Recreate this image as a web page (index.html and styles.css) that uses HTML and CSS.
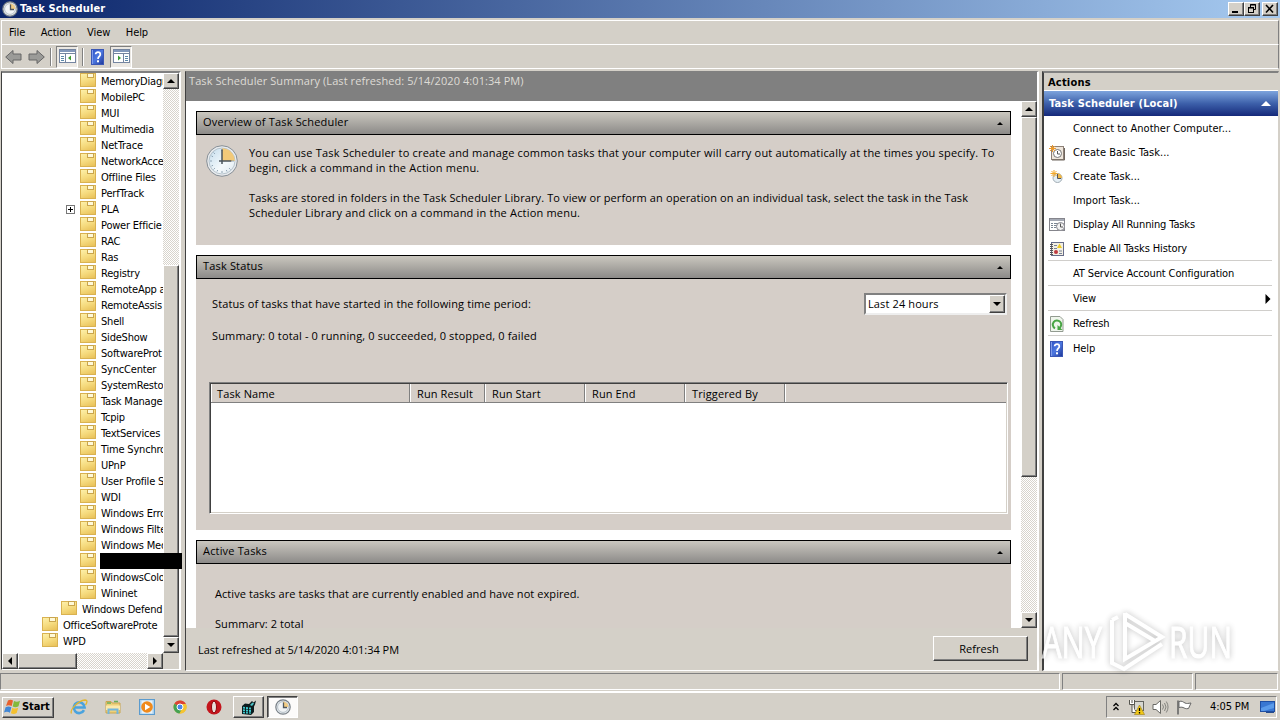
FILE: index.html
```html
<!DOCTYPE html>
<html lang="en">
<head>
  <meta charset="utf-8" />
  <title>Task Scheduler</title>
  <link rel="stylesheet" href="styles.css">
</head>
<body>
  <!-- shared icons -->
  <svg class="defs" width="0" height="0">
    <defs>
      <linearGradient id="helpBlue" x1="0" y1="0" x2="1" y2="1">
        <stop offset="0" stop-color="#2c4fc4" /><stop offset=".5" stop-color="#4d78e0" /><stop offset="1" stop-color="#1c3597" />
      </linearGradient>
      <linearGradient id="face" x1="0" y1="0" x2="1" y2="1">
        <stop offset="0" stop-color="#c3dcec" /><stop offset=".6" stop-color="#f4f9fc" /><stop offset="1" stop-color="#dfe9ef" />
      </linearGradient>
    </defs>
    <symbol id="clock" viewBox="0 0 32 32">
      <circle cx="16" cy="16" r="15.3" fill="#e9ecef" stroke="#858d94" stroke-width="1" />
      <circle cx="16" cy="16" r="13" fill="url(#face)" stroke="#a9b8c2" stroke-width=".8" />
      <path d="M16 16V3.2A12.8 12.8 0 0 1 28.8 16z" fill="#f2c979" />
      <path d="M16 4v2M16 26v2M4 16h2M26 16h2M7.5 7.5l1.4 1.4M7.5 24.5l1.4-1.4M24.5 24.5l-1.4-1.4M5.5 11l1.5.7M5.5 21l1.5-.7M11 26.5l.7-1.5M21 26.5l-.7-1.5" stroke="#8fa3b3" stroke-width="1" />
      <path d="M16 4.5V19M13 16h12.5" stroke="#4b545c" stroke-width="1.5" fill="none" />
    </symbol>
    <symbol id="clockSmall" viewBox="0 0 16 16">
      <circle cx="8" cy="8" r="7.2" fill="#e6ebef" stroke="#777f86" stroke-width="1.2" />
      <circle cx="8" cy="8" r="5.4" fill="#f1f4f6" stroke="#aab5bd" stroke-width=".8" />
      <path d="M8 8V2.600A5.400 5.400 0 0 1 13.400 8z" fill="#f3cd83" />
      <path d="M8.500 3.500v5H12" stroke="#505860" stroke-width="1.300" fill="none" />
    </symbol>
    <symbol id="help" viewBox="0 0 13 16">
      <rect x=".5" y=".5" width="12" height="15" fill="url(#helpBlue)" stroke="#3b57b5" />
      <path d="M1.5 1v14" stroke="#7f9cec" />
      <path d="M4.600 5.300C4.600 2.500 9.300 2.500 9.300 5.400C9.300 7.400 7 7.500 7 10" stroke="#fff" stroke-width="1.700" fill="none" />
      <rect x="6" y="11.300" width="2" height="2" fill="#fff" />
    </symbol>
  </svg>

  <header class="titlebar">
    <svg class="app-icon" width="16" height="16"><use href="#clockSmall" /></svg>
    <h1>Task Scheduler</h1>
    <div class="winbtns">
      <button><svg width="12" height="10"><path d="M2 8h6" stroke="#000" stroke-width="2" /></svg></button>
      <button><svg width="12" height="10"><path d="M4.500 3V.5h5v5H7M4 1h6M2 4h6" stroke="#000" fill="none" /><rect x="2.500" y="3.500" width="5" height="5" fill="none" stroke="#000" /></svg></button>
      <button class="close"><svg width="12" height="10"><path d="M2 1l7 7.500M9 1L2 8.500" stroke="#000" stroke-width="1.600" /></svg></button>
    </div>
  </header>

  <nav class="menubar">
    <span>File</span><span>Action</span><span>View</span><span>Help</span>
  </nav>

  <div class="toolbar">
    <svg class="arrow" width="17" height="16"><path d="M.7 8L8 1.500V5h8v6H8v3.500z" fill="#9b9b98" stroke="#666" /></svg>
    <svg class="arrow next" width="17" height="16"><path d="M16.300 8L9 1.500V5H1v6h8v3.500z" fill="#9b9b98" stroke="#666" /></svg>
    <i class="divider"></i>
    <span class="pressed"><svg width="17" height="15"><rect x=".5" y=".5" width="16" height="13" fill="#fff" stroke="#7585a0" /><path d="M1 2h15" stroke="#8398ba" stroke-width="2" /><path d="M1 4.500h15M6.500 5v9" stroke="#7585a0" /><path d="M2 7.500h3M2 9.500h3M2 11.500h3" stroke="#5c88a8" /><path d="M12 6.500v5l-3-2.500z" fill="#3b9b32" /></svg></span>
    <i class="divider second"></i>
    <svg class="tool-help" width="13" height="16"><use href="#help" /></svg>
    <span class="pressed"><svg width="17" height="15"><rect x=".5" y=".5" width="16" height="13" fill="#fff" stroke="#7585a0" /><path d="M1 2h15" stroke="#8398ba" stroke-width="2" /><path d="M1 4.500h15M10.500 5v9" stroke="#7585a0" /><path d="M12 7.500h3M12 9.500h3M12 11.500h3" stroke="#5c88a8" /><path d="M5 6.500v5l3-2.500z" fill="#3b9b32" /></svg></span>
  </div>

  <main class="panes">
    <section class="tree-pane">
      <div class="tree-row">
        <ul class="tree">
          <li>MemoryDiagr</li>
          <li>MobilePC</li>
          <li>MUI</li>
          <li>Multimedia</li>
          <li>NetTrace</li>
          <li>NetworkAcce</li>
          <li>Offline Files</li>
          <li>PerfTrack</li>
          <li class="expandable">PLA</li>
          <li>Power Efficie</li>
          <li>RAC</li>
          <li>Ras</li>
          <li>Registry</li>
          <li>RemoteApp a</li>
          <li>RemoteAssis</li>
          <li>Shell</li>
          <li>SideShow</li>
          <li>SoftwareProt</li>
          <li>SyncCenter</li>
          <li>SystemResto</li>
          <li>Task Manage</li>
          <li>Tcpip</li>
          <li>TextServices</li>
          <li>Time Synchro</li>
          <li>UPnP</li>
          <li>User Profile S</li>
          <li>WDI</li>
          <li>Windows Erro</li>
          <li>Windows Filte</li>
          <li>Windows Med</li>
          <li class="redacted"><b></b></li>
          <li>WindowsColo</li>
          <li>Wininet</li>
          <li class="up1">Windows Defend</li>
          <li class="up2">OfficeSoftwareProte</li>
          <li class="up2">WPD</li>
        </ul>
        <div class="vscroll tree-scroll">
          <span class="sbtn up"></span><span class="thumb"></span><span class="sbtn down"></span>
        </div>
      </div>
      <div class="hscroll">
        <span class="sbtn left"></span><span class="thumb"></span><span class="sbtn right"></span>
      </div>
    </section>

    <section class="summary">
      <h2>Task Scheduler Summary (Last refreshed: 5/14/2020 4:01:34 PM)</h2>
      <div class="scroll-area">
        <div class="cards">
          <article class="card overview">
            <h3>Overview of Task Scheduler</h3>
            <div class="card-body">
              <svg width="32" height="32"><use href="#clock" /></svg>
              <div>
                <p><span class="wide">You can use Task Scheduler to create and manage common tasks that your computer will carry out automatically at the times you specify. To<br>begin, click a command in the Action menu.</span></p>
                <p>Tasks are stored in folders in the Task Scheduler Library. To view or perform an operation on an individual task, select the task in the Task<br><span class="wide">Scheduler Library and click on a command in the Action menu.</span></p>
              </div>
            </div>
          </article>

          <article class="card status">
            <h3>Task Status</h3>
            <div class="card-body">
              <div class="period">
                <span>Status of tasks that have started in the following time period:</span>
                <div class="combo"><span>Last 24 hours</span><span class="sbtn down"></span></div>
              </div>
              <p class="totals">Summary: 0 total - 0 running, 0 succeeded, 0 stopped, 0 failed</p>
              <div class="grid">
                <div class="grid-head">
                  <span>Task Name</span><span>Run Result</span><span>Run Start</span><span>Run End</span><span>Triggered By</span><span></span>
                </div>
              </div>
            </div>
          </article>

          <article class="card active">
            <h3>Active Tasks</h3>
            <div class="card-body">
              <p>Active tasks are tasks that are currently enabled and have not expired.</p>
              <p>Summary: 2 total</p>
            </div>
          </article>
        </div>
        <div class="vscroll main-scroll">
          <span class="sbtn up"></span><span class="thumb"></span><span class="sbtn down"></span>
        </div>
      </div>
      <footer>
        <span>Last refreshed at 5/14/2020 4:01:34 PM</span>
        <button>Refresh</button>
      </footer>
    </section>

    <aside class="actions">
      <h2>Actions</h2>
      <h3>Task Scheduler (Local)</h3>
      <ul>
        <li><i></i><span class="dots">Connect to Another Computer...</span></li>
        <li><i><svg width="16" height="16"><rect x="2.500" y="1.500" width="12" height="13" fill="#eee6dc" stroke="#8e8177" /><path d="M3 15h12.500V3" stroke="#6f665f" fill="none" /><circle cx="8.500" cy="8.500" r="4" fill="#fff" stroke="#777" /><path d="M8.500 6v3H11" stroke="#555" fill="none" /><path d="M3.500 0v7M0 3.500h7M1 1l5 5M6 1L1 6" stroke="#eb9a2e" /></svg></i><span class="dots">Create Basic Task...</span></li>
        <li><i><svg width="16" height="16"><circle cx="8.500" cy="9" r="4.500" fill="#e4eef4" stroke="#a2adb5" /><path d="M8.500 9V4.500a4.500 4.500 0 0 1 4.500 4.500z" fill="#efb748" /><path d="M8.500 5v4.500H12" stroke="#555" fill="none" /><path d="M5 1v7M1.500 4.500h7M2.500 2l5 5M7.500 2l-5 5" stroke="#f2a92c" /></svg></i><span class="dots">Create Task...</span></li>
        <li><i></i><span class="dots">Import Task...</span></li>
        <li><i><svg width="16" height="16"><rect x=".5" y="1.500" width="15" height="12" fill="#fff" stroke="#85858c" /><path d="M1 3h14" stroke="#a4a9b4" stroke-width="2" /><path d="M2 6.500h2M5 6.500h4M2 8.500h2M5 8.500h3M2 10.500h2M5 10.500h2" stroke="#7b8794" /><circle cx="11.500" cy="9.500" r="4" fill="#f2f2f2" stroke="#85858c" /><path d="M11.500 6.500V10H14" stroke="#555" fill="none" /></svg></i>Display All Running Tasks</li>
        <li><i><svg width="16" height="16"><rect x="2.500" y="1.500" width="12" height="13" fill="#f3efe2" stroke="#656b88" /><path d="M1 3.500h3M1 5.500h3M1 7.500h3M1 9.500h3M1 11.500h3M1 13.500h3" stroke="#555" /><path d="M5 4.500h3M5 7.500h3M10 10h3M10 12.500h3" stroke="#76829a" /><path d="M8 7l2.500-4.500L13 7z" fill="#eecb25" /><circle cx="7" cy="11" r="2" fill="#be3a40" /></svg></i>Enable All Tasks History</li>
        <li class="sep"><i></i>AT Service Account Configuration</li>
        <li class="sep"><i></i>View<svg class="more" width="6" height="12"><path d="M.5 1v10L5.500 6z" /></svg></li>
        <li class="sep"><i><svg class="inset" width="14" height="16"><path d="M.5.5h9.500l3 3v12H.5z" fill="#eff5ec" stroke="#929b90" /><path d="M5 12.300a4.200 4.200 0 1 1 4.500-.3" fill="none" stroke="#49a545" stroke-width="2" /><path d="M7.500 9v5h5z" fill="#49a545" /></svg></i>Refresh</li>
        <li class="sep"><i><svg class="inset" width="13" height="16"><use href="#help" /></svg></i>Help</li>
      </ul>
    </aside>
  </main>

  <div class="statusbar"><span></span><span></span><span></span></div>

  <footer class="taskbar">
    <button class="start">
      <svg width="17" height="16"><path d="M4 1.500C5.500.3 7.500.5 9 1.500L7.700 7C5.500 5.800 3.500 6 2 7z" fill="#e8602c" /><path d="M10 2c2 1.200 4 1 6-.3l-1.500 5.500c-2 1.200-4 1.200-5.800.2z" fill="#83b93b" /><path d="M1.600 8.300c2-1.200 4-1 5.800 0l-1.500 5.500C4.100 12.500 2 12.500 0 13.600z" fill="#4187d5" /><path d="M8.300 8.700c2 1.200 4 1 5.900 0l-1.500 5.300c-2 1.300-4 1.200-5.800.3z" fill="#f4c02f" /></svg>Start
    </button>
    <div class="quick">
      <svg width="18" height="18" viewBox="0 0 18 18"><path d="M14 12.200a5.400 5.400 0 1 1 .6-2.700H5" fill="none" stroke="#4aa3de" stroke-width="2.600" /><path d="M1.500 15.500C-.5 12 8 2.500 15 2c3 0 2 3 .5 5" fill="none" stroke="#e3b62f" stroke-width="1.300" /></svg>
      <svg width="18" height="18" viewBox="0 0 18 18"><path d="M2 3.500h5l1 1.500h8v10H2z" fill="#eed17a" stroke="#c9a54e" /><path d="M3 5h4M10 3.500h4" stroke="#67ad5a" stroke-width="1.500" /><path d="M2 7.500h14V12H2z" fill="#fae9ac" /><path d="M4.500 16v-4.500h9V16" fill="none" stroke="#72b6dc" stroke-width="2" /></svg>
      <svg width="18" height="18" viewBox="0 0 18 18"><rect x="1.500" y="1.500" width="15" height="15" fill="#a9d0ee" stroke="#5b9bce" /><rect x="3.500" y="2.500" width="11" height="13" fill="#e7f1f8" /><circle cx="9" cy="9" r="5.800" fill="#f08a1c" /><path d="M7 5.700v6.600L12.300 9z" fill="#fff" /></svg>
      <svg width="18" height="18" viewBox="0 0 18 18"><circle cx="9" cy="9" r="6.500" fill="#e0b92c" /><path d="M9 9L3.400 5.700A6.500 6.500 0 0 1 14.900 6H9z" fill="#dc4335" /><path d="M9 9L3.400 5.700A6.500 6.500 0 0 0 8.500 15.500L11.500 10z" fill="#46a252" /><path d="M9 6h5.900A6.500 6.500 0 0 1 8.500 15.500l3-5z" fill="#f5c431" /><circle cx="9" cy="9" r="3" fill="#4a87e8" stroke="#fff" /></svg>
      <svg width="18" height="18" viewBox="0 0 18 18"><circle cx="9" cy="9" r="7.500" fill="#c4151c" /><ellipse cx="9" cy="9" rx="2.500" ry="5.800" fill="#e8e0da" stroke="#8b080e" /></svg>
    </div>
    <span class="task"><svg width="18" height="18" viewBox="0 0 18 18"><path d="M2 8l3-2.500L9 6l3-3 1.500 1.500L16 2.500l-1 4-1 2v5.500L11 17l-9-1z" fill="#0d1c1e" /><path d="M3 8.800l2 .2v1.800l-2-.2zM6 9.100l2 .2v1.800l-2-.2zM9 9.400l2 .2v1.800l-2-.2zM3 11.300l2 .2v1.800l-2-.2zM6 11.600l2 .2v1.800l-2-.2zM9 11.900l2 .2v1.800l-2-.2zM3 13.800l2 .2v1.400l-2-.2zM6 14l2 .2v1.400l-2-.2zM9 14.300l2 .2v1.300l-2-.2z" fill="#3fc9ce" /><path d="M10 7l2.500-2.500 1.500 1L12 8z" fill="#4fc5ca" /></svg></span>
    <span class="task current"><svg width="16" height="16"><use href="#clockSmall" /></svg></span>
    <div class="tray">
      <svg width="8" height="10"><path d="M1.500 4L4 1.500 6.500 4M1.500 8L4 5.500 6.500 8" fill="none" stroke="#000" stroke-width="1.300" /></svg>
      <svg class="net" width="17" height="16"><rect x="6.500" y="2.500" width="9" height="9" fill="#d7d7d1" stroke="#64645f" /><path d="M1.500 1v4.500h5V1M4 1v3M4 6v7.500h4" fill="#fff" stroke="#55554f" /><path d="M6.500 15.500L11.500 6 16.500 15.500z" fill="#f1c817" stroke="#9c7e15" stroke-width=".6" /><path d="M11.500 9v3M11.500 13v1.500" stroke="#000" stroke-width="1.300" /></svg>
      <svg class="vol" width="17" height="16"><path d="M1 5.500h3L8.500 1.500v13L4 10.500H1z" fill="#fff" stroke="#696965" /><path d="M10.500 5.500q2 2.500 0 5M12.500 4q3 4 0 8M14.300 2.500q3.500 5.500 0 11" fill="none" stroke="#84847f" /></svg>
      <svg class="flag" width="17" height="16"><path d="M2 1.500v14" stroke="#666" stroke-width="1.600" /><path d="M3 2.500c3-1 4 .5 6 1.500s3 .3 6 0l-2.500 5.500c-3 .7-4-.5-5.500-1-1.500-.5-2.500-.3-4 0z" fill="#fff" stroke="#666" /></svg>
      <time>4:05 PM</time>
      <svg class="desk" width="15" height="13"><rect x=".5" y=".5" width="14" height="10" fill="#3977d2" stroke="#1f4ea2" /><path d="M1 7l13-5v5L4 10H1z" fill="#5b9bea" /><path d="M6 11.500h8" stroke="#264b8b" /></svg>
    </div>
  </footer>

  <div class="watermark">
    <svg width="204" height="72">
      <g class="mark">
        <text x="5" y="52" textLength="60" lengthAdjust="spacingAndGlyphs">ANY</text>
        <text x="132" y="52" textLength="63" lengthAdjust="spacingAndGlyphs">RUN</text>
        <path d="M88 8L125 31 88 53V7M75 14V57L87 63 125 38M75 14l6-3M88 17L118 35" />
      </g>
    </svg>
  </div>
</body>
</html>
```
FILE: styles.css
```css
:root{
  --face:#d4d0c8; --face2:#d5cec8; --shadow:#808080; --dark:#404040;
  --ui:"DejaVu Sans Condensed","DejaVu Sans",sans-serif;
  --pane:"Open Sans","Noto Sans",sans-serif;
}
*{box-sizing:border-box;margin:0;padding:0}
body{width:1280px;height:720px;overflow:hidden;background:var(--face);color:#000;font:11px/16px var(--ui);display:flex;flex-direction:column;position:relative}
h1,h2,h3{font-size:11px}
ul{list-style:none}
svg{display:block;flex:none}
button{font:inherit;background:var(--face);border:1px solid;border-color:#fff var(--dark) var(--dark) #fff;box-shadow:inset -1px -1px var(--shadow)}
.defs{position:absolute}

/* title, menu, toolbar */
.titlebar{height:18px;flex:none;display:flex;align-items:center;background:linear-gradient(90deg,#0a246a,#a6caf0);color:#fff;padding:0 2px}
.titlebar h1{margin-left:2px;font:bold 11px/18px var(--ui);letter-spacing:.1px}
.winbtns{display:flex;margin-left:auto}
.winbtns button{width:16px;height:14px;padding:1px}
.winbtns .close{margin-left:2px}
.menubar{height:24px;flex:none;margin:2px 1px 0;border-top:1px solid #fff;border-left:1px solid #fff;border-right:1px solid var(--shadow);display:flex;gap:15.500px;padding:4px 0 0 7px;letter-spacing:-.05px}
.toolbar{height:25px;flex:none;margin:0 1px;border:1px solid #fff;border-right-color:var(--shadow);display:flex;align-items:center;padding-left:3px}
.arrow.next{margin-left:6px}
.divider{width:2px;height:18px;border-left:1px solid var(--shadow);border-right:1px solid #fff;margin:0 4px 0 5px}
.divider.second{margin:0 7px 0 4px}
.pressed{width:22px;height:22px;border:1px solid;border-color:var(--shadow) #fff #fff var(--shadow);background:#ebe8e3;display:flex;align-items:center;justify-content:center}
.tool-help{margin-right:6px}

/* three panes */
.panes{height:600px;flex:none;margin-top:2px;display:flex}
.tree-pane{width:180px;height:599px;margin-left:1px;border:1px solid;border-color:var(--shadow) #fff #fff var(--dark);border-top-width:2px;background:#fff;display:flex;flex-direction:column;border-right-width:2px}
.tree-row{display:flex;height:581px}
.tree{width:161px;overflow:hidden;white-space:nowrap}
.tree li{height:16px;line-height:17px;padding-left:79px;display:flex;position:relative;letter-spacing:-.2px}
.tree li::before{content:"";width:14px;height:12px;margin:1px 6px 0 0;flex:none;background:linear-gradient(160deg,#fdf0a9,#f6dc80 50%,#e8c057);border:1px solid #d9b251;transform:translateY(-1px)}
.tree li::before{margin-right:5px;margin-left:-1px}
.tree li::after{content:"";position:absolute;left:85px;top:0;width:5px;height:3px;background:#fff9d8;border:1px solid #c9a54e}
.tree .up1{padding-left:60px}
.tree .up1::after{left:66px}
.tree .up2{padding-left:41px}
.tree .up2::after{left:47px}
.tree .expandable{background:linear-gradient(#000,#000) 66px 8px/5px 1px no-repeat,linear-gradient(#000,#000) 68px 6px/1px 5px no-repeat,linear-gradient(#fff,#fff) 65px 5px/7px 7px no-repeat,linear-gradient(#777,#777) 64px 4px/9px 9px no-repeat}
.redacted b{position:fixed;left:100px;top:553px;width:82px;height:16px;background:#000}

.vscroll,.hscroll{background:repeating-conic-gradient(#fff 0 25%,#d8d4cc 0 50%) 0 0/2px 2px;display:flex;flex:none}
.vscroll{width:16px;flex-direction:column}
.sbtn,.thumb{display:block;flex:none;background:var(--face);border:1px solid;border-color:#fff var(--dark) var(--dark) #fff;box-shadow:inset -1px -1px var(--shadow)}
.sbtn{width:16px;height:16px;display:flex;align-items:center;justify-content:center}
.sbtn::before{content:"";border:4px solid transparent}
.sbtn.up::before{border-width:0 4px 4px;border-bottom-color:#000}
.sbtn.down::before{border-width:4px 4px 0;border-top-color:#000}
.sbtn.left::before{border-width:4px 4px 4px 0;border-right-color:#000}
.sbtn.right::before{border-width:4px 0 4px 4px;border-left-color:#000}
.sbtn.down,.sbtn.right{margin-top:auto}
.tree-scroll .thumb{height:372px;margin-top:176px}
.main-scroll .thumb{height:360px}
.hscroll{width:161px;height:16px;box-shadow:16px 0 var(--face)}
.hscroll .thumb{width:59px}
.hscroll .right{margin:0 0 0 auto}

.summary{width:854px;height:600px;margin-left:4px;border:1px solid;border-color:var(--shadow) #fff #fff var(--dark);border-right-width:2px;font-family:var(--pane);display:flex;flex-direction:column}
.summary h2{height:29px;flex:none;background:#808080;color:#dedbd5;font-weight:400;line-height:17px;padding-left:3px;letter-spacing:.08px}
.scroll-area{height:527px;background:#fff;display:flex;overflow:hidden}
.cards{width:835px;padding:10px 10px 0;height:527px;overflow:hidden}
.card{width:815px;margin-bottom:10px;background:var(--face2)}
.card h3{height:24px;border:1px solid #000;background:linear-gradient(#cac7bf,#8c8a88);font-weight:400;line-height:20px;padding:0 7px 0 6px;display:flex;justify-content:space-between;letter-spacing:.17px}
.card h3::after{content:"";border:3px solid transparent;border-top:0;border-bottom-color:#000;align-self:center}
.overview{height:134px}
.overview .card-body{display:flex;padding:10px 0 0 10px;gap:11px;line-height:15px;white-space:nowrap}
.overview p{margin-bottom:15px;letter-spacing:.11px}
.overview .wide{letter-spacing:.19px}
.status{height:275px}
.status .card-body{padding:13px 3px 0 13px;letter-spacing:.12px}
.period{display:flex;justify-content:space-between;align-items:center;padding:0 1px 0 3px;height:23px}
.combo{width:143px;height:22px;background:#fff;border:2px solid;border-color:var(--shadow) #eee #eee var(--shadow);display:flex;justify-content:space-between;padding-left:2px;line-height:18px}
.combo .sbtn{height:18px;margin:0}
.totals{margin:12px 0 0 3px;line-height:18px;height:37px;letter-spacing:.15px}
.grid{width:799px;height:132px;margin-top:18px;background:#fff;border:1px solid;border-color:var(--shadow) #fff #fff var(--shadow);box-shadow:inset 1px 1px var(--dark),inset -1px -1px var(--face)}
.grid-head{display:flex;margin:1px 1px 0;height:19px;background:var(--face2);border-bottom:1px solid var(--shadow)}
.grid-head span{width:100px;padding-left:6px;border-right:1px solid var(--shadow);border-left:1px solid #fff;line-height:20px}
.grid-head span:nth-child(1){width:199px;padding-left:5px}
.grid-head span:nth-child(2){width:75px}
.grid-head span:last-child{flex:1;border-right:0}
.active{margin-bottom:0}
.active .card-body{height:64px;padding:22px 0 0 19px;letter-spacing:.07px}
.active p{line-height:16px;margin-bottom:14px}
.active p:last-child{margin:0;height:12px;overflow:hidden}
.summary footer{flex:1;background:var(--face);display:flex;justify-content:space-between;padding:8px 9px 0 12px}
.summary footer span{line-height:28px}
.summary footer button{width:95px;height:25px;padding-right:3px}

.actions{width:237px;height:600px;margin-left:3px;border:1px solid;border-color:var(--shadow) var(--face) #fff var(--dark);border-width:2px 1px 1px 2px;background:#fff}
.actions h2{height:17px;background:var(--face);line-height:19px;padding-left:4px;letter-spacing:.2px}
.actions h3{height:26px;border-top:1px solid #fff;background:linear-gradient(#7da4dd,#3d60aa 50%,#15297a);color:#fff;line-height:26px;padding:0 7px 0 5px;display:flex;justify-content:space-between;letter-spacing:.15px}
.actions h3::after{content:"";border:5px solid transparent;border-top:0;border-bottom-color:#fff;align-self:center}
.actions ul{padding:0 6px 0 4px}
.actions li{height:24px;display:flex;align-items:center;padding-top:1px;letter-spacing:-.12px}
.actions li.sep{height:25px;border-top:1px solid #d0cecb}
.actions li i{width:25px;display:block;padding-left:1px}
.actions .dots{letter-spacing:.03px}
.inset{margin-left:1px}
.more{margin-left:auto;margin-right:1px}

/* bottom */
.statusbar{height:20px;flex:none;margin-top:1px;display:flex;gap:2px;padding:1px 2px 1px 0;border-bottom:1px solid #fff}
.statusbar span{width:131px;border:1px solid;border-color:var(--shadow) #fff #fff var(--shadow)}
.statusbar span:first-child{width:1060px}
.statusbar span:last-child{flex:1}
.taskbar{flex:1;display:flex;align-items:center;padding:1px 3px 0 2px;border-top:1px solid #fff}
.start{width:52px;height:21px;display:flex;align-items:center;font-weight:bold;gap:1px;padding-left:1px;letter-spacing:-.1px}
.quick{display:flex;gap:15.800px;margin-left:16px;width:164px}
.task{width:31px;height:22px;border:1px solid;border-color:#fff var(--dark) var(--dark) #fff;box-shadow:inset -1px -1px var(--shadow);display:flex;align-items:center;justify-content:center;margin-left:-1px}
.task.current{margin-left:3px;background:#fcfbfa;border-color:var(--dark) #fff #fff var(--dark);box-shadow:inset 1px 1px var(--shadow)}
.tray{width:171px;height:22px;margin-left:auto;border:1px solid;border-color:var(--shadow) #fff #fff var(--shadow);display:flex;align-items:center;padding-left:5px}
.tray .net{margin-left:8px}
.tray .vol{margin-left:7px}
.tray .flag{margin-left:7px}
.tray time{margin-left:17px;width:50px;white-space:nowrap;letter-spacing:-.1px}

.watermark{position:absolute;left:1037px;top:606px;opacity:.72}
.mark{filter:drop-shadow(0 0 3px rgba(0,0,0,.35))}
.mark text{font:44px "Open Sans",sans-serif;fill:#fff;stroke:#fff}
.mark path{fill:none;stroke:#fff;stroke-width:4}
```
